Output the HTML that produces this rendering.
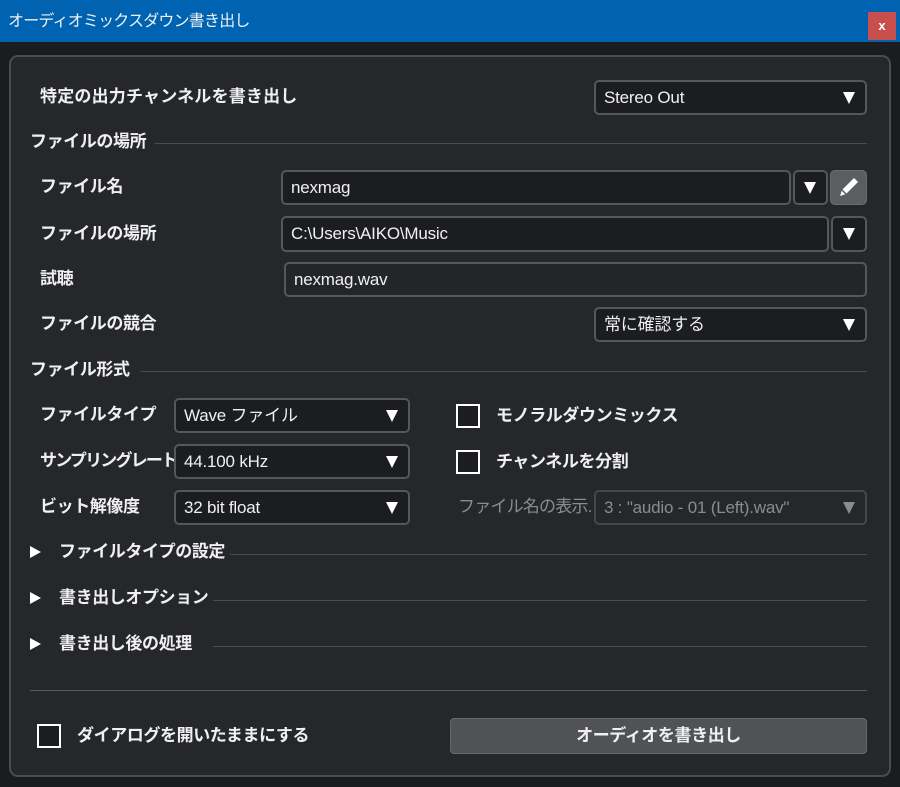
<!DOCTYPE html>
<html><head><meta charset="utf-8"><style>
*{box-sizing:border-box;margin:0;padding:0}
body{width:900px;height:787px;background:#1b1c1f;position:relative;overflow:hidden;font-family:"Liberation Sans","Noto Sans CJK JP",sans-serif;color:#f0f0f0}
.a{position:absolute}
.t{position:absolute;font-size:17px;line-height:20px;white-space:nowrap;letter-spacing:-0.4px;font-weight:bold}
.box{position:absolute;background:#1c1d21;border:2px solid #55575b;border-radius:5px}
.dd{position:absolute;background:#1c1d21;border:2px solid #55575b;border-radius:5px;font-size:17px;line-height:31px;padding-left:8px;white-space:nowrap;font-weight:normal;letter-spacing:-0.2px}
.tri{position:absolute;width:0;height:0;border-left:6px solid transparent;border-right:6px solid transparent;border-top:12px solid #fff}
.line{position:absolute;height:1px;background:#4a4c50}
.cb{position:absolute;width:24px;height:24px;border:2px solid #fff;background:#1c1d21}
.ar{position:absolute;width:0;height:0;border-top:6px solid transparent;border-bottom:6px solid transparent;border-left:11px solid #fff}
</style></head><body>
<div class="a" style="left:0;top:0;width:900px;height:42px;background:#0063b1"></div>
<div class="t" style="left:8px;top:12px;font-size:16px;font-weight:normal;letter-spacing:-0.8px">オーディオミックスダウン書き出し</div>
<div class="a" style="left:868px;top:12px;width:28px;height:28px;background:#c94f4f;color:#fff;font-size:13px;text-align:center;line-height:28px;font-weight:bold">x</div>
<div class="a" style="left:9px;top:55px;width:882px;height:722px;background:#25272b;border:2px solid #4a4c50;border-radius:9px"></div>

<div class="t" style="left:40px;top:87px;letter-spacing:0.2px">特定の出力チャンネルを書き出し</div>
<div class="dd" style="left:594px;top:80px;width:273px;height:35px">Stereo Out</div><div class="tri" style="left:843px;top:92px"></div>

<div class="t" style="left:30px;top:132px">ファイルの場所</div><div class="line" style="left:155px;top:143px;width:712px"></div>
<div class="t" style="left:40px;top:177px">ファイル名</div>
<div class="dd" style="left:281px;top:170px;width:510px;height:35px">nexmag</div>
<div class="box" style="left:793px;top:170px;width:35px;height:35px"></div><div class="tri" style="left:804px;top:182px"></div>
<div class="a" style="left:830px;top:170px;width:37px;height:35px;background:#5b5d61;border-radius:5px;border:1px solid #6a6c70"></div>
<svg class="a" style="left:836px;top:174px" width="26" height="26" viewBox="0 0 26 26"><path d="M4 22 L6 16 L18 4 L22 8 L10 20 Z" fill="#fff"/><path d="M6 16 L10 20" stroke="#5b5d61" stroke-width="1.5"/></svg>

<div class="t" style="left:40px;top:224px">ファイルの場所</div>
<div class="dd" style="left:281px;top:216px;width:548px;height:36px">C:\Users\AIKO\Music</div>
<div class="box" style="left:831px;top:216px;width:36px;height:36px"></div><div class="tri" style="left:843px;top:228px"></div>

<div class="t" style="left:40px;top:269px">試聴</div>
<div class="dd" style="left:284px;top:262px;width:583px;height:35px;background:#232529">nexmag.wav</div>

<div class="t" style="left:40px;top:314px">ファイルの競合</div>
<div class="dd" style="left:594px;top:307px;width:273px;height:35px">常に確認する</div><div class="tri" style="left:843px;top:319px"></div>

<div class="t" style="left:30px;top:360px">ファイル形式</div><div class="line" style="left:140px;top:371px;width:727px"></div>

<div class="t" style="left:40px;top:405px">ファイルタイプ</div>
<div class="dd" style="left:174px;top:398px;width:236px;height:35px">Wave ファイル</div><div class="tri" style="left:386px;top:410px"></div>
<div class="cb" style="left:456px;top:404px"></div><div class="t" style="left:496px;top:406px">モノラルダウンミックス</div>

<div class="t" style="left:40px;top:451px;letter-spacing:-1.8px">サンプリングレート</div>
<div class="dd" style="left:174px;top:444px;width:236px;height:35px">44.100 kHz</div><div class="tri" style="left:386px;top:456px"></div>
<div class="cb" style="left:456px;top:450px"></div><div class="t" style="left:496px;top:452px">チャンネルを分割</div>

<div class="t" style="left:40px;top:497px">ビット解像度</div>
<div class="dd" style="left:174px;top:490px;width:236px;height:35px">32 bit float</div><div class="tri" style="left:386px;top:502px"></div>
<div class="t" style="left:458px;top:497px;color:#8a8c90;font-weight:normal;letter-spacing:-0.8px">ファイル名の表示.</div>
<div class="dd" style="left:594px;top:490px;width:273px;height:35px;background:#25272b;border-color:#45474b;color:#8a8c90">3 : "audio - 01 (Left).wav"</div><div class="tri" style="left:843px;top:502px;border-top-color:#8a8c90"></div>

<div class="ar" style="left:30px;top:546px"></div><div class="t" style="left:59px;top:542px">ファイルタイプの設定</div><div class="line" style="left:230px;top:554px;width:637px"></div>
<div class="ar" style="left:30px;top:592px"></div><div class="t" style="left:59px;top:588px">書き出しオプション</div><div class="line" style="left:213px;top:600px;width:654px"></div>
<div class="ar" style="left:30px;top:638px"></div><div class="t" style="left:59px;top:634px">書き出し後の処理</div><div class="line" style="left:213px;top:646px;width:654px"></div>

<div class="line" style="left:30px;top:690px;width:837px;background:#55575b"></div>
<div class="cb" style="left:37px;top:724px"></div><div class="t" style="left:77px;top:726px">ダイアログを開いたままにする</div>
<div class="a" style="left:450px;top:718px;width:417px;height:36px;background:#505256;border:1px solid #65676b;border-radius:4px;text-align:center;font-size:17px;line-height:34px;font-weight:bold;letter-spacing:-0.4px">オーディオを書き出し</div>
</body></html>
